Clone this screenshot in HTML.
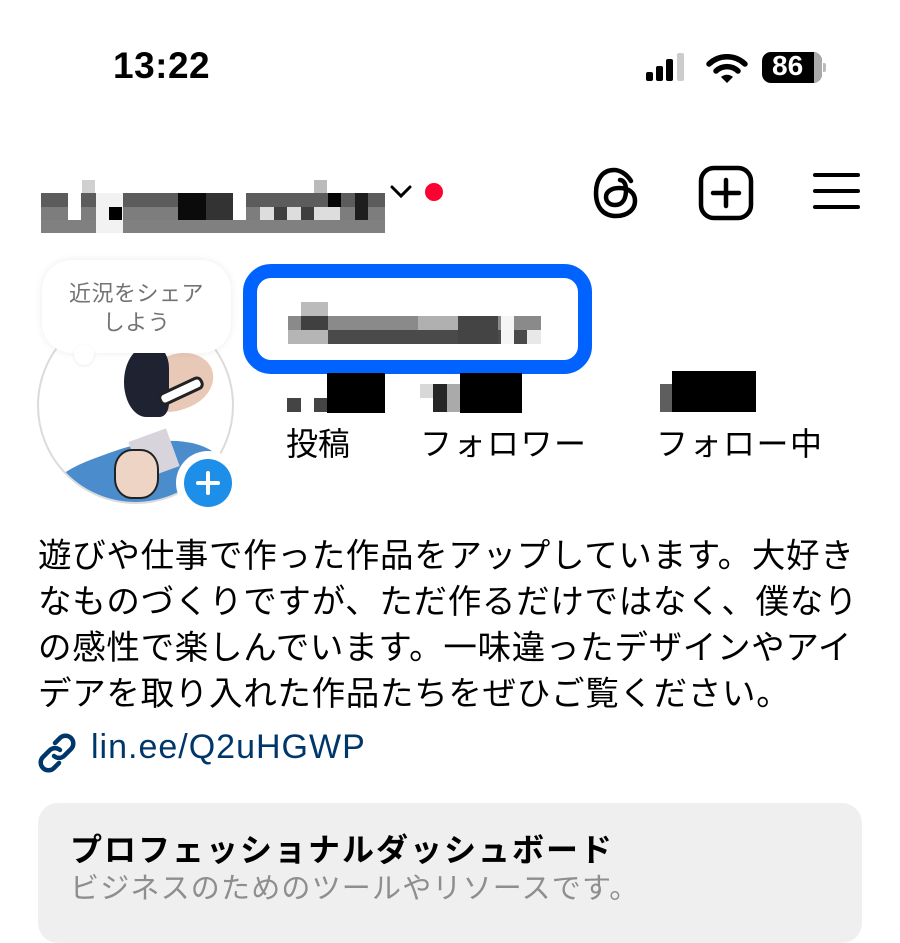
<!DOCTYPE html>
<html><head><meta charset="utf-8"><style>
*{margin:0;padding:0;box-sizing:border-box}
body{width:900px;height:900px;overflow:hidden;background:#fff;position:relative;font-family:"Liberation Sans","Noto Sans CJK JP",sans-serif;color:#000}
.a{position:absolute}
.jp{font-family:"Noto Sans CJK JP",sans-serif;white-space:nowrap}
.px{position:absolute}
</style></head><body>
<div class="a" style="left:113px;top:45px;font-size:37px;font-weight:bold;letter-spacing:0.5px">13:22</div>
<!-- signal -->
<div class="a" style="left:646px;top:72px;width:7px;height:9px;background:#000;border-radius:2px"></div>
<div class="a" style="left:656px;top:66px;width:7px;height:15px;background:#000;border-radius:2px"></div>
<div class="a" style="left:666px;top:59px;width:7px;height:22px;background:#000;border-radius:2px"></div>
<div class="a" style="left:677px;top:53px;width:7px;height:28px;background:#ccc;border-radius:2px"></div>
<svg class="a" style="left:706px;top:52px" width="42" height="32" viewBox="0 0 42 32"><path d="M3 12 A26 26 0 0 1 39 12" stroke="#000" stroke-width="5.5" fill="none" stroke-linecap="round"/><path d="M10 19 A16 16 0 0 1 32 19" stroke="#000" stroke-width="5.5" fill="none" stroke-linecap="round"/><path d="M15 25 L21 31 L27 25 A9 9 0 0 0 15 25Z" fill="#000"/></svg>
<div class="a" style="left:762px;top:52px;width:60px;height:31px;border-radius:9px;background:#000;overflow:hidden"><div class="a" style="right:0;top:0;width:8px;height:31px;background:#aaa"></div><div class="a" style="left:10px;top:-2px;color:#fff;font-weight:bold;font-size:28px">86</div></div>
<div class="a" style="left:823px;top:63px;width:3px;height:9px;background:#bbb;border-radius:0 2px 2px 0"></div>

<!-- username pixel -->
<div class="a" style="left:41px;top:180px;width:344px;height:53px">
<div class="px" style="left:0;top:13px;width:344px;height:14px;background:#5c5c5c"></div>
<div class="px" style="left:0;top:27px;width:344px;height:13px;background:#7d7d7d"></div>
<div class="px" style="left:0;top:40px;width:344px;height:13px;background:#808080"></div>
<div class="px" style="left:27px;top:13px;width:13px;height:27px;background:#fff"></div>
<div class="px" style="left:55px;top:13px;width:27px;height:40px;background:#f2f2f2"></div>
<div class="px" style="left:68px;top:27px;width:13px;height:13px;background:#000"></div>
<div class="px" style="left:137px;top:13px;width:28px;height:27px;background:#0b0b0b"></div>
<div class="px" style="left:165px;top:13px;width:27px;height:27px;background:#333"></div>
<div class="px" style="left:192px;top:13px;width:13px;height:27px;background:#fff"></div>
<div class="px" style="left:219px;top:27px;width:80px;height:13px;background:#ddd"></div>
<div class="px" style="left:233px;top:27px;width:13px;height:13px;background:#3f3f3f"></div>
<div class="px" style="left:260px;top:27px;width:13px;height:13px;background:#3f3f3f"></div>
<div class="px" style="left:287px;top:13px;width:13px;height:14px;background:#050505"></div>
<div class="px" style="left:314px;top:13px;width:13px;height:27px;background:#1e1e1e"></div>
<div class="px" style="left:273px;top:0;width:13px;height:13px;background:#bbb"></div>
<div class="px" style="left:41px;top:0;width:13px;height:13px;background:#d0d0d0"></div>
</div>
<svg class="a" style="left:390px;top:185px" width="22" height="14" viewBox="0 0 22 14"><path d="M2 2 L11 11 L20 2" stroke="#000" stroke-width="3" fill="none" stroke-linecap="round"/></svg>
<div class="a" style="left:425px;top:183px;width:18px;height:18px;border-radius:50%;background:#ff0033"></div>

<!-- threads -->
<svg class="a" style="left:592px;top:167px" width="48" height="52" viewBox="0 0 48 52"><path d="M39 14 C34 6 27 3 22 3 C10 3 4 13 4 26 C4 40 11 49 24 49 C36 49 43 42 43 34 C43 25 36 21 27 21 C19 21 14 25 14 30 C14 35 18 38 23 38 C31 38 34 31 34 23 C34 16 31 13 28 13" stroke="#000" stroke-width="4.5" fill="none" stroke-linecap="round"/></svg>
<svg class="a" style="left:698px;top:165px" width="56" height="56" viewBox="0 0 56 56"><rect x="3" y="3" width="50" height="50" rx="13" stroke="#000" stroke-width="4.5" fill="none"/><path d="M28 15V41M15 28H41" stroke="#000" stroke-width="4.5" stroke-linecap="round"/></svg>
<div class="a" style="left:813px;top:173px;width:47px;height:4px;background:#000;border-radius:2px"></div>
<div class="a" style="left:813px;top:189px;width:47px;height:4px;background:#000;border-radius:2px"></div>
<div class="a" style="left:813px;top:205px;width:47px;height:4px;background:#000;border-radius:2px"></div>

<!-- avatar -->
<div class="a" style="left:37px;top:307px;width:197px;height:197px;border-radius:50%;border:2px solid #dbdbdb;background:#fff;overflow:hidden">
<div class="a" style="left:105px;top:45px;width:70px;height:55px;background:#e8c9b8;border-radius:40% 50% 50% 40%;transform:rotate(-20deg)"></div>
<div class="a" style="left:85px;top:38px;width:45px;height:70px;background:#1f2230;border-radius:50% 30% 20% 50%"></div>
<div class="a" style="left:118px;top:75px;width:48px;height:14px;background:#fff;border:3px solid #222;border-radius:6px;transform:rotate(-25deg)"></div>
<div class="a" style="left:-10px;top:140px;width:200px;height:100px;background:#4a8ccc;border-radius:40% 50% 0 0;transform:rotate(-20deg)"></div>
<div class="a" style="left:95px;top:125px;width:40px;height:40px;background:#d8d4dc;transform:rotate(-20deg)"></div>
<div class="a" style="left:75px;top:140px;width:45px;height:50px;background:#eed4c4;border:2px solid #222;border-radius:40%"></div>
</div>
<div class="a" style="left:176px;top:451px;width:64px;height:64px;border-radius:50%;background:#fff"></div>
<div class="a" style="left:184px;top:459px;width:48px;height:48px;border-radius:50%;background:#1d8fe8"></div>
<div class="a" style="left:196px;top:481px;width:24px;height:4px;background:#fff;border-radius:2px"></div>
<div class="a" style="left:206px;top:471px;width:4px;height:24px;background:#fff;border-radius:2px"></div>
<!-- bubble -->
<div class="a" style="left:42px;top:260px;width:189px;height:93px;border-radius:30px;background:#fff;box-shadow:0 0 8px rgba(0,0,0,0.08)"></div>
<div class="a" style="left:74px;top:345px;width:20px;height:20px;border-radius:50%;background:#fff;box-shadow:0 1px 3px rgba(0,0,0,0.08)"></div>
<div class="a jp" style="left:42px;top:278px;width:189px;text-align:center;font-size:22px;line-height:29px;color:#737373;letter-spacing:0.5px">近況をシェア<br>しよう</div>

<!-- blue box -->
<div class="a" style="left:243px;top:264px;width:349px;height:110px;border:14px solid #0062ff;border-radius:28px"></div>
<div class="a" style="left:288px;top:302px;width:253px;height:40px">
<div class="px" style="left:0;top:14px;width:253px;height:14px;background:#8a8a8a"></div>
<div class="px" style="left:0;top:28px;width:253px;height:14px;background:#4a4a4a"></div>
<div class="px" style="left:0;top:28px;width:40px;height:14px;background:#b5b5b5"></div>
<div class="px" style="left:13px;top:14px;width:27px;height:14px;background:#404040"></div>
<div class="px" style="left:130px;top:14px;width:40px;height:14px;background:#b0b0b0"></div>
<div class="px" style="left:170px;top:14px;width:40px;height:28px;background:#444"></div>
<div class="px" style="left:213px;top:14px;width:13px;height:28px;background:#f5f5f5"></div>
<div class="px" style="left:239px;top:28px;width:14px;height:14px;background:#e8e8e8"></div>
<div class="px" style="left:13px;top:0;width:27px;height:14px;background:#bbb"></div>
</div>

<!-- stats -->
<div class="a" style="left:287px;top:398px;width:14px;height:14px;background:#444"></div>
<div class="a" style="left:314px;top:398px;width:14px;height:14px;background:#444"></div>
<div class="a" style="left:327px;top:373px;width:58px;height:40px;background:#000"></div>
<div class="a" style="left:420px;top:384px;width:14px;height:14px;background:#d8d8d8"></div>
<div class="a" style="left:433px;top:384px;width:14px;height:28px;background:#262626"></div>
<div class="a" style="left:447px;top:384px;width:14px;height:28px;background:#aaa"></div>
<div class="a" style="left:460px;top:373px;width:62px;height:40px;background:#000"></div>
<div class="a" style="left:660px;top:384px;width:13px;height:28px;background:#5e5e5e"></div>
<div class="a" style="left:672px;top:371px;width:84px;height:41px;background:#000"></div>
<div class="a jp" style="left:286px;top:420px;font-size:32px;line-height:44px">投稿</div>
<div class="a jp" style="left:420px;top:420px;font-size:32px;line-height:44px;letter-spacing:1.5px">フォロワー</div>
<div class="a jp" style="left:656px;top:420px;font-size:32px;line-height:44px;letter-spacing:1.5px">フォロー中</div>

<!-- bio -->
<div class="a jp" style="left:38px;top:530px;font-size:33.5px;line-height:46px;letter-spacing:0.7px">遊びや仕事で作った作品をアップしています。大好き<br>なものづくりですが、ただ作るだけではなく、僕なり<br>の感性で楽しんでいます。一味違ったデザインやアイ<br>デアを取り入れた作品たちをぜひご覧ください。</div>

<svg class="a" style="left:38px;top:733px" width="38" height="40" viewBox="0 0 38 40"><g stroke="#00376b" stroke-width="4.5" fill="none" stroke-linecap="round"><path d="M17 10 L22 5 A7.5 7.5 0 0 1 33 16 L26 23 A7.5 7.5 0 0 1 16 23"/><path d="M21 30 L16 35 A7.5 7.5 0 0 1 5 24 L12 17 A7.5 7.5 0 0 1 22 17"/></g></svg>
<div class="a" style="left:91px;top:728px;font-size:34px;color:#00376b;letter-spacing:1px">lin.ee/Q2uHGWP</div>

<div class="a" style="left:38px;top:803px;width:824px;height:140px;border-radius:20px;background:#efefef"></div>
<div class="a jp" style="left:70px;top:826px;font-size:32px;font-weight:bold;line-height:44px;letter-spacing:2px">プロフェッショナルダッシュボード</div>
<div class="a jp" style="left:70px;top:866px;font-size:29px;line-height:40px;color:#8e8e8e;letter-spacing:1.2px">ビジネスのためのツールやリソースです。</div>
</body></html>
